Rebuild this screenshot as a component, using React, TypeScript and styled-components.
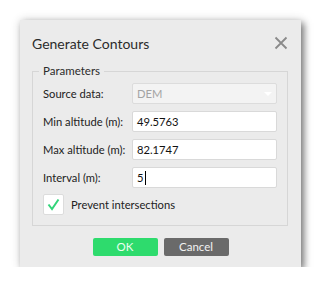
import React from "react";
import styled, { createGlobalStyle } from "styled-components";

const Global = createGlobalStyle`
  html, body { margin: 0; padding: 0; background: #ffffff; }
  body { font-family: Lato, "Noto Sans", sans-serif; }
  * { box-sizing: border-box; }
`;

const Page = styled.div`
  padding: 20px 0 0 20px;
`;

const Dialog = styled.div`
  width: 281px;
  height: 247px;
  background: #ebebeb;
  padding: 0 13px 11px 12px;
  display: flex;
  flex-direction: column;
  box-shadow: 3px 3px 7px rgba(0, 0, 0, 0.5), 0 0 10px rgba(0, 0, 0, 0.12);
`;

const Header = styled.div`
  height: 43px;
  padding-top: 3px;
  display: flex;
  align-items: center;
  justify-content: space-between;
`;

const Title = styled.div`
  font-size: 14px;
  color: #2b2b2b;
`;

const Close = styled.button`
  width: 14px;
  height: 14px;
  padding: 0;
  border: 0;
  background: transparent;
  display: flex;
  align-items: center;
  justify-content: center;
`;

const Group = styled.fieldset`
  margin: 0;
  border: 1px solid #d6d6d6;
  padding: 4px 10px 10px 10px;
  display: flex;
  flex-direction: column;
  gap: 7px;
  min-width: 0;
`;

const Legend = styled.legend`
  font-size: 11.5px;
  color: #2b2b2b;
  padding: 0 4px;
  margin-left: -4px;
  line-height: 16px;
`;

const Row = styled.div`
  display: grid;
  grid-template-columns: 89px 145px;
  align-items: center;
  height: 21px;
`;

const Label = styled.span`
  font-size: 11.2px;
  color: #222;
  white-space: nowrap;
`;

const Field = styled.div<{ $disabled?: boolean }>`
  position: relative;
  height: 21px;
  border: 1px solid ${(p) => (p.$disabled ? "#dcdcdc" : "#d9d9d9")};
  border-radius: 2px;
  background: ${(p) => (p.$disabled ? "#f3f3f3" : "#ffffff")};
  color: ${(p) => (p.$disabled ? "#a3a3a3" : "#111")};
  font-size: 11.2px;
  padding-left: 4px;
  display: flex;
  align-items: center;
`;

const Caret = styled.span`
  display: inline-block;
  width: 1px;
  height: 14px;
  background: #000;
  margin-left: 1px;
`;

const Arrow = styled.span`
  position: absolute;
  right: 4px;
  top: 8px;
  width: 0;
  height: 0;
  border-left: 4px solid transparent;
  border-right: 4px solid transparent;
  border-top: 4px solid #ffffff;
`;

const CheckRow = styled.label`
  display: flex;
  align-items: center;
  gap: 7px;
  margin-top: -1px;
  height: 21px;
`;

const Box = styled.span`
  width: 21px;
  height: 21px;
  background: #ffffff;
  border: 1px solid #dcdcdc;
  border-radius: 2px;
  display: flex;
  align-items: center;
  justify-content: center;
`;

const Buttons = styled.div`
  margin-top: 12px;
  display: flex;
  justify-content: center;
  gap: 6px;
  padding-left: 1px;
`;

const Button = styled.button<{ $primary?: boolean }>`
  width: 65px;
  height: 18px;
  border: 0;
  border-radius: 2px;
  padding: 0;
  font-family: Lato, "Noto Sans", sans-serif;
  font-size: 11.5px;
  line-height: 18px;
  background: ${(p) => (p.$primary ? "#2edb6d" : "#6a6a6a")};
  color: ${(p) => (p.$primary ? "#eafff0" : "#f2f2f2")};
`;

export default function App() {
  return (
    <>
      <Global />
      <Page>
        <Dialog>
          <Header>
            <Title>Generate Contours</Title>
            <Close aria-label="Close">
              <svg width="14" height="14" viewBox="0 0 14 14">
                <path d="M1.5 1.5 L12.5 12.5 M12.5 1.5 L1.5 12.5" stroke="#8a8a8a" strokeWidth="1.8" fill="none" />
              </svg>
            </Close>
          </Header>
          <Group>
            <Legend>Parameters</Legend>
            <Row>
              <Label>Source data:</Label>
              <Field $disabled>
                DEM
                <Arrow />
              </Field>
            </Row>
            <Row>
              <Label>Min altitude (m):</Label>
              <Field>49.5763</Field>
            </Row>
            <Row>
              <Label>Max altitude (m):</Label>
              <Field>82.1747</Field>
            </Row>
            <Row>
              <Label>Interval (m):</Label>
              <Field>
                5<Caret />
              </Field>
            </Row>
            <CheckRow>
              <Box>
                <svg width="15" height="15" viewBox="0 0 15 15">
                  <path d="M2.5 7.5 L6 12 L12.5 2.5" stroke="#33d47a" strokeWidth="2" fill="none" />
                </svg>
              </Box>
              <Label>Prevent intersections</Label>
            </CheckRow>
          </Group>
          <Buttons>
            <Button $primary>OK</Button>
            <Button>Cancel</Button>
          </Buttons>
        </Dialog>
      </Page>
    </>
  );
}
